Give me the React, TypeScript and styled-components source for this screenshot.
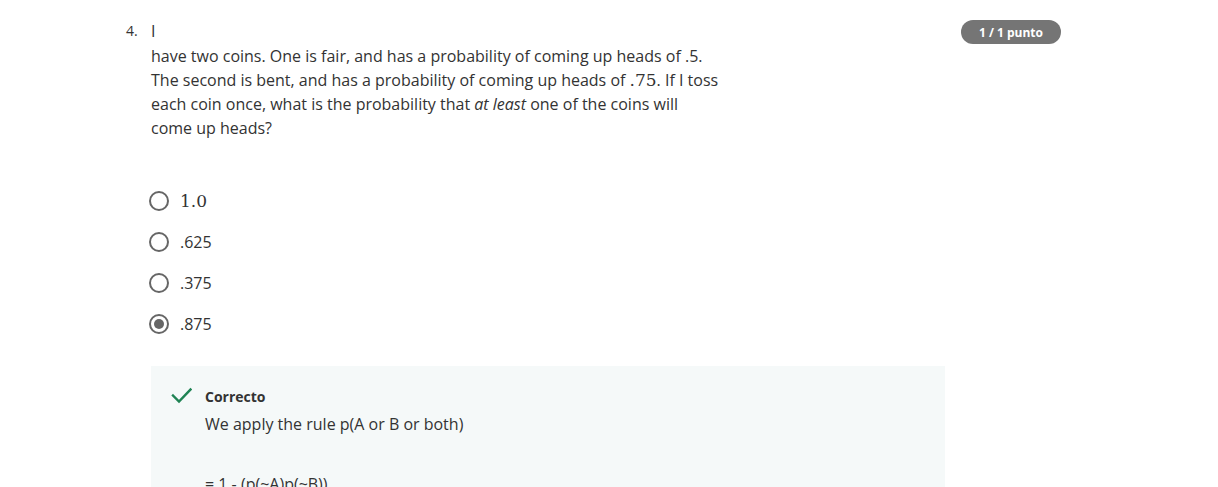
import React from "react";
import styled, { createGlobalStyle } from "styled-components";

const Global = createGlobalStyle`
  html, body { margin: 0; padding: 0; background: #fff; }
  body { font-family: "Open Sans", "DejaVu Sans", sans-serif; color: #333; }
`;

const Page = styled.div`
  padding: 19px 0 0 126px;
  width: 935px;
`;

const QuestionRow = styled.div`
  display: flex;
  align-items: flex-start;
`;

const Number = styled.div`
  width: 25px;
  font-size: 14px;
  line-height: 24px;
  color: #333;
`;

const Prompt = styled.div`
  flex: 1;
  font-size: 16px;
  line-height: 24px;
  max-width: 570px;
`;

const FirstLine = styled.div`
  margin-bottom: 1px;
`;

const Math = styled.span`
  font-family: "DejaVu Serif", "Liberation Serif", serif;
  font-size: 17px;
  line-height: 16px;
`;

const Badge = styled.div`
  margin-left: auto;
  margin-top: 1px;
  height: 24px;
  width: 100px;
  border-radius: 12px;
  background: #757575;
  color: #fff;
  font-size: 12px;
  font-weight: 700;
  display: flex;
  align-items: center;
  justify-content: center;
`;

const Options = styled.div`
  margin: 40px 0 0 23px;
  display: flex;
  flex-direction: column;
`;

const Option = styled.label`
  display: flex;
  align-items: center;
  height: 41px;
  gap: 11px;
`;

const Radio = styled.span<{ $checked?: boolean }>`
  width: 20px;
  height: 20px;
  box-sizing: border-box;
  border: 2px solid #666;
  border-radius: 50%;
  display: flex;
  align-items: center;
  justify-content: center;
  &::after {
    content: "";
    display: ${(p) => (p.$checked ? "block" : "none")};
    width: 10px;
    height: 10px;
    border-radius: 50%;
    background: #666;
  }
`;

const OptionText = styled.span<{ $serif?: boolean }>`
  font-family: ${(p) =>
    p.$serif ? '"DejaVu Serif", "Liberation Serif", serif' : '"Open Sans", sans-serif'};
  font-size: ${(p) => (p.$serif ? "17px" : "16px")};
  line-height: 24px;
`;

const Feedback = styled.div`
  margin: 22px 0 0 25px;
  width: 794px;
  background: #f5f9f9;
  padding: 19px 20px 40px 20px;
  box-sizing: border-box;
  display: flex;
  gap: 13px;
`;

const CheckIcon = styled.svg`
  flex: none;
  width: 21px;
  height: 21px;
  margin-top: 1px;
`;

const FeedbackBody = styled.div`
  display: flex;
  flex-direction: column;
`;

const FeedbackTitle = styled.div`
  font-size: 14px;
  font-weight: 700;
  line-height: 24px;
`;

const FeedbackText = styled.p<{ $gap?: number }>`
  margin: ${(p) => p.$gap ?? 3}px 0 0;
  font-size: 16px;
  line-height: 24px;
`;

const options = [
  { label: "1.0", serif: true },
  { label: ".625" },
  { label: ".375" },
  { label: ".875", checked: true },
];

export default function App() {
  return (
    <>
      <Global />
      <Page>
        <QuestionRow>
          <Number>4.</Number>
          <Prompt>
            <FirstLine>I</FirstLine>
            have two coins. One is fair, and has a probability of coming up heads of .5. The
            second is bent, and has a probability of coming up heads of <Math>.75</Math>. If I
            toss each coin once, what is the probability that <em>at least</em> one of the coins
            will come up heads?
          </Prompt>
          <Badge>1 / 1 punto</Badge>
        </QuestionRow>
        <Options>
          {options.map((o) => (
            <Option key={o.label}>
              <Radio $checked={o.checked} />
              <OptionText $serif={o.serif}>{o.label}</OptionText>
            </Option>
          ))}
        </Options>
        <Feedback>
          <CheckIcon viewBox="0 0 21 21">
            <path
              d="M2 9.5 L8 15.5 L19.5 3.5"
              fill="none"
              stroke="#1f8354"
              strokeWidth="2.4"
              strokeLinecap="square"
            />
          </CheckIcon>
          <FeedbackBody>
            <FeedbackTitle>Correcto</FeedbackTitle>
            <FeedbackText>We apply the rule p(A or B or both)</FeedbackText>
            <FeedbackText $gap={36}>= 1 - (p(~A)p(~B))</FeedbackText>
          </FeedbackBody>
        </Feedback>
      </Page>
    </>
  );
}
